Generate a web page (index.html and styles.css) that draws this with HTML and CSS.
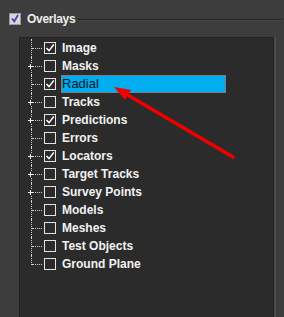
FILE: index.html
```html
<!DOCTYPE html>
<html lang="en">
<head>
    <meta charset="UTF-8">
    <title>Overlays</title>
    <link rel="stylesheet" href="styles.css">
</head>
<body>
    <div class="panel">
        <div class="group-title">
            <svg class="group-check" width="12" height="12" viewBox="0 0 12 12">
                <rect x="0.5" y="0.5" width="11" height="11" fill="#d6d6de" stroke="#9a9aa6"/>
                <path d="M3 5.5l2.2 3 3.8-6.5" fill="none" stroke="#4040b0" stroke-width="1.7"/>
            </svg>
            <span class="group-label">Overlays</span>
            <span class="group-rule"></span>
        </div>
        <ul class="tree">
            <li class="node"><span class="branch"></span><span class="check"><svg width="10" height="10" viewBox="0 0 10 10"><path d="M1.5 5l2.5 2.7 4.8-6.2" fill="none" stroke="#fff" stroke-width="1.5"/></svg></span><span class="label">Image</span></li>
            <li class="node"><span class="branch"><span class="plus"></span></span><span class="check"></span><span class="label">Masks</span></li>
            <li class="node"><span class="branch"></span><span class="check"><svg width="10" height="10" viewBox="0 0 10 10"><path d="M1.5 5l2.5 2.7 4.8-6.2" fill="none" stroke="#fff" stroke-width="1.5"/></svg></span><span class="label selected">Radial</span></li>
            <li class="node"><span class="branch"><span class="plus"></span></span><span class="check"></span><span class="label">Tracks</span></li>
            <li class="node"><span class="branch"><span class="plus"></span></span><span class="check"><svg width="10" height="10" viewBox="0 0 10 10"><path d="M1.5 5l2.5 2.7 4.8-6.2" fill="none" stroke="#fff" stroke-width="1.5"/></svg></span><span class="label">Predictions</span></li>
            <li class="node"><span class="branch"></span><span class="check"></span><span class="label">Errors</span></li>
            <li class="node"><span class="branch"><span class="plus"></span></span><span class="check"><svg width="10" height="10" viewBox="0 0 10 10"><path d="M1.5 5l2.5 2.7 4.8-6.2" fill="none" stroke="#fff" stroke-width="1.5"/></svg></span><span class="label">Locators</span></li>
            <li class="node"><span class="branch"><span class="plus"></span></span><span class="check"></span><span class="label">Target Tracks</span></li>
            <li class="node"><span class="branch"><span class="plus"></span></span><span class="check"></span><span class="label">Survey Points</span></li>
            <li class="node"><span class="branch"></span><span class="check"></span><span class="label">Models</span></li>
            <li class="node"><span class="branch"></span><span class="check"></span><span class="label">Meshes</span></li>
            <li class="node"><span class="branch"></span><span class="check"></span><span class="label">Test Objects</span></li>
            <li class="node last"><span class="branch"></span><span class="check"></span><span class="label">Ground Plane</span></li>
        </ul>

        <!-- annotation arrow pointing at the selected row -->
        <svg class="arrow" width="284" height="317" viewBox="0 0 284 317">
            <line x1="233" y1="157" x2="126" y2="94" stroke="#f20000" stroke-width="3.5" stroke-linecap="round"/>
            <polygon points="114,87 131,90 125,100" fill="#f20000"/>
        </svg>
    </div>
</body>
</html>
```

FILE: styles.css
```css
body {
    margin: 0;
    background-color: #3d3d3d;
    font-family: "Liberation Sans", Arial, sans-serif;
    overflow: hidden;
}
.panel {
    position: relative;
    height: 317px;
    padding-top: 13px;
    box-sizing: border-box;
    overflow: hidden;
}
.group-title {
    display: flex;
    align-items: center;
    height: 12px;
    padding-left: 9px;
}
.group-check {
    flex: none;
}
.group-label {
    margin-left: 6px;
    color: #ececec;
    font-size: 12px;
    font-weight: bold;
    letter-spacing: -0.3px;
}
.group-rule {
    flex: 1;
    margin: 2px 2px 0 3px;
    border-top: 1px solid #262626;
    border-bottom: 1px solid #464646;
}
.tree {
    list-style: none;
    margin: 12px 0 0 19px;
    padding: 1px 0 0;
    width: 253px;
    height: 279px;
    background-color: #2b2b2b;
    border: 1px solid #222;
    border-bottom: none;
    box-shadow: 2px 0 0 #4c4c4c;
}
.node {
    display: flex;
    align-items: center;
    height: 18px;
}
.branch {
    position: relative;
    flex: none;
    width: 24px;
    height: 18px;
}
.branch::before {
    content: "";
    position: absolute;
    left: 11px;
    top: 0;
    bottom: 0;
    border-left: 1px dotted #d0d0d0;
}
.branch::after {
    content: "";
    position: absolute;
    left: 12px;
    top: 9px;
    width: 10px;
    border-top: 1px dotted #d0d0d0;
}
.last .branch::before {
    bottom: 8px;
}
.plus {
    position: absolute;
    left: 8px;
    top: 7px;
    width: 5px;
    height: 5px;
    z-index: 1;
    background:
        linear-gradient(#eee, #eee) center / 5px 1px no-repeat,
        linear-gradient(#eee, #eee) center / 1px 5px no-repeat,
        #2b2b2b;
}
.check {
    flex: none;
    display: flex;
    align-items: center;
    justify-content: center;
    width: 12px;
    height: 12px;
    box-sizing: border-box;
    border: 1px solid #e4e4e4;
}
.label {
    margin-left: 5px;
    border: 1px solid transparent;
    line-height: 16px;
    color: #f2f2f2;
    font-size: 12px;
    font-weight: bold;
    white-space: nowrap;
}
.label.selected {
    width: 163px;
    background-color: #00adee;
    border: 1px dotted #e8541e;
    color: #141424;
    font-size: 13px;
    font-weight: normal;
}
.arrow {
    position: absolute;
    left: 0;
    top: 0;
    pointer-events: none;
}
```
